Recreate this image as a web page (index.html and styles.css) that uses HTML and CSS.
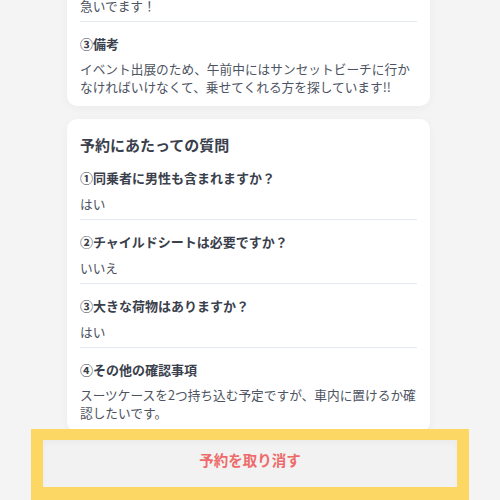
FILE: index.html
```html
<!DOCTYPE html>
<html lang="ja">
<head>
  <title>予約詳細</title>
  <meta charset="utf-8">
  <link rel="stylesheet" href="styles.css">
</head>
<body>
	<div class="page">
		<div class="card">
			<div class="item">
				<p class="question">②到着の希望時間</p>
				<p class="answer">急いでます！</p>
			</div>
			<div class="item last">
				<p class="question">③備考</p>
				<p class="answer">イベント出展のため、午前中にはサンセットビーチに行かなければいけなくて、乗せてくれる方を探しています!!</p>
			</div>
		</div>

		<div class="card">
			<h2 class="card-title">予約にあたっての質問</h2>
			<div class="item">
				<p class="question">①同乗者に男性も含まれますか？</p>
				<p class="answer">はい</p>
			</div>
			<div class="item">
				<p class="question">②チャイルドシートは必要ですか？</p>
				<p class="answer">いいえ</p>
			</div>
			<div class="item">
				<p class="question">③大きな荷物はありますか？</p>
				<p class="answer">はい</p>
			</div>
			<div class="item last">
				<p class="question">④その他の確認事項</p>
				<p class="answer">スーツケースを2つ持ち込む予定ですが、車内に置けるか確認したいです。</p>
			</div>
		</div>
	</div>

	<div class="bottom-bar">
		<button type="button" class="cancel">予約を取り消す</button>
	</div>
</body>
</html>
```

FILE: styles.css
```css
html
{
	background: #f4f4f4;
}
body
{
	margin: 0;
	font-family: "Noto Sans CJK JP", "Noto Sans", sans-serif;
	color: #454b57;
}
p
{
	margin: 0;
}
.page
{
	width: 363px;
	margin: -42px 0 0 67px;
	padding-bottom: 70px;
}
.card
{
	background: #fff;
	border-radius: 10px;
	padding: 0 13px 10px;
	margin-bottom: 13px;
	box-shadow: 0 2px 10px rgba(0, 0, 0, 0.04);
}
.card-title
{
	margin: 0;
	padding-top: 14px;
	font-size: 15px;
	line-height: 23px;
	font-weight: 700;
	color: #3a404c;
}
.item
{
	padding: 12px 0 6px;
	border-bottom: 1px solid #e4e9f0;
}
.item.last
{
	border-bottom: none;
	padding-bottom: 0;
}
.question
{
	font-size: 13px;
	line-height: 20px;
	font-weight: 700;
	color: #3a404c;
	margin-bottom: 6px;
}
.answer
{
	font-size: 12.7px;
	line-height: 19px;
	color: #4d5361;
}
.item.last .answer
{
	line-height: 18px;
}
.bottom-bar
{
	position: fixed;
	left: 31px;
	right: 31px;
	bottom: 0;
	height: 47px;
	border: solid #fdd764;
	border-width: 11px 12px 13px 12px;
	background: #f2f2f2;
	box-shadow: inset 0 3px 6px rgba(0, 0, 0, 0.03);
}
.cancel
{
	display: block;
	width: 100%;
	height: 100%;
	border: none;
	background: transparent;
	padding: 0 0 8px;
	font-family: inherit;
	font-size: 14.5px;
	line-height: 22px;
	font-weight: 700;
	color: #ee6b6b;
	text-align: center;
	cursor: pointer;
}
```
